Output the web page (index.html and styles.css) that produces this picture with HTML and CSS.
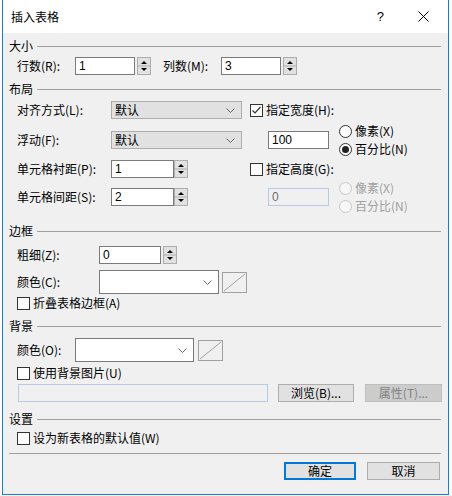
FILE: index.html
```html
<!DOCTYPE html>
<html lang="zh-CN">
<head>
<meta charset="utf-8">
<title>插入表格</title>
<link rel="stylesheet" href="styles.css">
</head>
<body>
<div class="page">
  <div class="dialog">
    <div class="titlebar">
      <span class="title">插入表格</span>
      <span class="help">?</span>
      <svg class="close" width="11" height="11" viewBox="0 0 11 11"><path d="M0.5 0.5L10.5 10.5M10.5 0.5L0.5 10.5" stroke="#000" stroke-width="1"/></svg>
    </div>
    <div class="content">
      <div class="grp g1">大小</div>
      <div class="row r-size">
        <span class="lbl w58">行数(R):</span>
        <div class="tb w60">1</div>
        <svg class="spin" width="14" height="18" viewBox="0 0 14 18"><rect x="0.5" y="0.5" width="13" height="17" fill="#e1e1e1" stroke="#adadad"/><line x1="1" y1="9" x2="13" y2="9" stroke="#adadad"/><path d="M4 7h6L7 4z" fill="#000"/><path d="M4 11h6l-3 3z" fill="#000"/></svg>
        <span class="lbl w58 ml12">列数(M):</span>
        <div class="tb w60">3</div>
        <svg class="spin" width="14" height="18" viewBox="0 0 14 18"><rect x="0.5" y="0.5" width="13" height="17" fill="#e1e1e1" stroke="#adadad"/><line x1="1" y1="9" x2="13" y2="9" stroke="#adadad"/><path d="M4 7h6L7 4z" fill="#000"/><path d="M4 11h6l-3 3z" fill="#000"/></svg>
      </div>

      <div class="grp g2">布局</div>
      <div class="row r-l1">
        <span class="lbl w94">对齐方式(L):</span>
        <div class="left-ctrl"><div class="sel w131"><span>默认</span><svg width="9" height="5" viewBox="0 0 9 5"><path d="M0.5 0.5L4.5 4.5L8.5 0.5" fill="none" stroke="#666"/></svg></div></div>
        <span class="cb checked"><svg width="13" height="13" viewBox="0 0 13 13"><rect x="0.5" y="0.5" width="12" height="12" fill="#fff" stroke="#333"/><path d="M2.5 6.5L5 9L10.5 3" fill="none" stroke="#333" stroke-width="1.2"/></svg>指定宽度(H):</span>
      </div>
      <div class="row r-l2">
        <span class="lbl w94">浮动(F):</span>
        <div class="left-ctrl"><div class="sel w131"><span>默认</span><svg width="9" height="5" viewBox="0 0 9 5"><path d="M0.5 0.5L4.5 4.5L8.5 0.5" fill="none" stroke="#666"/></svg></div></div>
        <div class="tb w61 ml18">100</div>
        <div class="radios">
          <span class="rb"><svg width="13" height="13" viewBox="0 0 13 13"><circle cx="6.5" cy="6.5" r="6" fill="#fff" stroke="#333"/></svg>像素(X)</span>
          <span class="rb"><svg width="13" height="13" viewBox="0 0 13 13"><circle cx="6.5" cy="6.5" r="6" fill="#fff" stroke="#333"/><circle cx="6.5" cy="6.5" r="3.5" fill="#222"/></svg>百分比(N)</span>
        </div>
      </div>
      <div class="row r-l3">
        <span class="lbl w94">单元格衬距(P):</span>
        <div class="left-ctrl">
          <div class="tb w63">1</div>
          <svg class="spin tight" width="14" height="18" viewBox="0 0 14 18"><rect x="0.5" y="0.5" width="13" height="17" fill="#e1e1e1" stroke="#adadad"/><line x1="1" y1="9" x2="13" y2="9" stroke="#adadad"/><path d="M4 7h6L7 4z" fill="#000"/><path d="M4 11h6l-3 3z" fill="#000"/></svg>
        </div>
        <span class="cb"><svg width="13" height="13" viewBox="0 0 13 13"><rect x="0.5" y="0.5" width="12" height="12" fill="#fff" stroke="#333"/></svg>指定高度(G):</span>
      </div>
      <div class="row r-l4">
        <span class="lbl w94">单元格间距(S):</span>
        <div class="left-ctrl">
          <div class="tb w63">2</div>
          <svg class="spin tight" width="14" height="18" viewBox="0 0 14 18"><rect x="0.5" y="0.5" width="13" height="17" fill="#e1e1e1" stroke="#adadad"/><line x1="1" y1="9" x2="13" y2="9" stroke="#adadad"/><path d="M4 7h6L7 4z" fill="#000"/><path d="M4 11h6l-3 3z" fill="#000"/></svg>
        </div>
        <div class="tb w61 ml18 disabled">0</div>
        <div class="radios dis">
          <span class="rb"><svg width="13" height="13" viewBox="0 0 13 13"><circle cx="6.5" cy="6.5" r="6" fill="#f7f7f7" stroke="#c6c6c6"/></svg>像素(X)</span>
          <span class="rb"><svg width="13" height="13" viewBox="0 0 13 13"><circle cx="6.5" cy="6.5" r="6" fill="#f7f7f7" stroke="#c6c6c6"/></svg>百分比(N)</span>
        </div>
      </div>

      <div class="grp g3">边框</div>
      <div class="row r-b1">
        <span class="lbl w82">粗细(Z):</span>
        <div class="tb w62">0</div>
        <svg class="spin" width="14" height="18" viewBox="0 0 14 18"><rect x="0.5" y="0.5" width="13" height="17" fill="#e1e1e1" stroke="#adadad"/><line x1="1" y1="9" x2="13" y2="9" stroke="#adadad"/><path d="M4 7h6L7 4z" fill="#000"/><path d="M4 11h6l-3 3z" fill="#000"/></svg>
      </div>
      <div class="row tall r-b2">
        <span class="lbl w82">颜色(C):</span>
        <div class="csel w120"><svg width="9" height="5" viewBox="0 0 9 5"><path d="M0.5 0.5L4.5 4.5L8.5 0.5" fill="none" stroke="#666"/></svg></div>
        <svg class="swatch" width="25" height="21" viewBox="0 0 25 21"><rect x="0.5" y="0.5" width="24" height="20" fill="#f0f0f0" stroke="#a0a0a0"/><path d="M2 19L23 2" stroke="#a0a0a0"/></svg>
      </div>
      <div class="row cbrow r-b3">
        <span class="cb"><svg width="13" height="13" viewBox="0 0 13 13"><rect x="0.5" y="0.5" width="12" height="12" fill="#fff" stroke="#333"/></svg>折叠表格边框(A)</span>
      </div>

      <div class="grp g4">背景</div>
      <div class="row tall r-k1">
        <span class="lbl w58">颜色(O):</span>
        <div class="csel w119"><svg width="9" height="5" viewBox="0 0 9 5"><path d="M0.5 0.5L4.5 4.5L8.5 0.5" fill="none" stroke="#666"/></svg></div>
        <svg class="swatch sw2" width="25" height="21" viewBox="0 0 25 21"><rect x="0.5" y="0.5" width="24" height="20" fill="#f0f0f0" stroke="#a0a0a0"/><path d="M2 19L23 2" stroke="#a0a0a0"/></svg>
      </div>
      <div class="row cbrow r-k2">
        <span class="cb"><svg width="13" height="13" viewBox="0 0 13 13"><rect x="0.5" y="0.5" width="12" height="12" fill="#fff" stroke="#333"/></svg>使用背景图片(U)</span>
      </div>
      <div class="row r-k3">
        <div class="tb path disabled"></div>
        <button class="btn browse">浏览(B)...</button>
        <button class="btn props" disabled>属性(T)...</button>
      </div>

      <div class="grp g5">设置</div>
      <div class="row cbrow r-s1">
        <span class="cb"><svg width="13" height="13" viewBox="0 0 13 13"><rect x="0.5" y="0.5" width="12" height="12" fill="#fff" stroke="#333"/></svg>设为新表格的默认值(W)</span>
      </div>
      <div class="sep"></div>
      <div class="footer">
        <button class="btn ok">确定</button>
        <button class="btn cancel">取消</button>
      </div>
    </div>
  </div>
</div>
</body>
</html>
```

FILE: styles.css
```css
html, body {
  margin: 0;
  background: #ffffff;
}
body {
  font-family: "Noto Sans CJK SC", "Noto Sans", sans-serif;
  font-size: 12px;
  color: #000;
  line-height: 14px;
}
.page {
  padding-left: 2px;
}
.dialog {
  width: 445px;
  height: 494px;
  border: 1px solid #1a7fd4;
  border-top: none;
  background: #f0f0f0;
}
.titlebar {
  height: 33px;
  background: #fff;
  display: flex;
  align-items: center;
  padding-left: 8px;
  box-sizing: border-box;
}
.title {
  font-size: 12px;
}
.help {
  margin-left: auto;
  font-family: "Liberation Sans", sans-serif;
  font-size: 13px;
  margin-right: 34px;
}
.close {
  margin-right: 19px;
}
.content {
  padding: 0 7px 0 6px;
}
.grp {
  display: flex;
  align-items: center;
  height: 14px;
}
.grp::after {
  content: "";
  flex: 1;
  height: 1px;
  background: #a0a0a0;
  margin-left: 4px;
}
.g1 { margin-top: 6px; }
.g2 { margin-top: 7px; }
.g3 { margin-top: 18px; }
.g4 { margin-top: 9px; }
.g5 { margin-top: 10px; }

.row {
  display: flex;
  align-items: center;
  height: 18px;
  padding-left: 8px;
}
.row.tall { height: 24px; }
.row.cbrow { height: 14px; }
.r-size { margin-top: 4px; }
.r-l1 { margin-top: 5px; }
.r-l2 { margin-top: 12px; }
.r-l3 { margin-top: 11px; }
.r-l4 { margin-top: 10px; }
.r-b1 { margin-top: 8px; }
.r-b2 { margin-top: 6px; }
.r-b3 { margin-top: 2px; }
.r-k1 { margin-top: 5px; }
.r-k2 { margin-top: 4px; }
.r-k3 { margin-top: 4px; padding-left: 9px; }
.r-s1 { margin-top: 5px; }

.lbl { flex: none; white-space: nowrap; }
.w58 { width: 58px; }
.w82 { width: 82px; }
.w94 { width: 94px; }
.ml12 { margin-left: 12px; }
.ml18 { margin-left: 18px; }

.tb {
  box-sizing: border-box;
  height: 18px;
  border: 1px solid #7a7a7a;
  background: #fff;
  padding-left: 3px;
  line-height: 16px;
  font-family: "Liberation Sans", "Noto Sans CJK SC", sans-serif;
  font-size: 12px;
  flex: none;
}
.tb.disabled {
  border-color: #b6cbe3;
  background: #f0f0f0;
  color: #6d6d6d;
}
.w60 { width: 60px; }
.w61 { width: 61px; }
.w62 { width: 62px; }
.w63 { width: 63px; }
.spin { flex: none; margin-left: 2px; display: block; }
.spin.tight { margin-left: 0; }

.left-ctrl {
  width: 139px;
  flex: none;
  display: flex;
  align-items: center;
}
.sel {
  box-sizing: border-box;
  height: 18px;
  border: 1px solid #adadad;
  background: #e1e1e1;
  display: flex;
  align-items: center;
  justify-content: space-between;
  padding: 0 6px 0 3px;
}
.w131 { width: 131px; }
.csel {
  box-sizing: border-box;
  height: 24px;
  border: 1px solid #7a7a7a;
  background: #fff;
  display: flex;
  align-items: center;
  justify-content: flex-end;
  padding-right: 6px;
  flex: none;
}
.w120 { width: 120px; }
.w119 { width: 119px; }
.swatch { flex: none; margin-left: 3px; display: block; }
.swatch.sw2 { margin-left: 4px; }

.cb, .rb {
  display: flex;
  align-items: center;
  white-space: nowrap;
}
.cb svg, .rb svg {
  flex: none;
  margin-right: 3px;
}
.radios {
  display: flex;
  flex-direction: column;
  margin-left: 10px;
}
.radios .rb { height: 18px; }
.radios.dis { color: #a0a0a0; }

.path {
  width: 250px;
}
.btn {
  box-sizing: border-box;
  height: 18px;
  border: 1px solid #adadad;
  background: #e1e1e1;
  font-family: "Noto Sans CJK SC", sans-serif;
  font-size: 12px;
  line-height: 14px;
  color: #000;
  padding: 0;
  flex: none;
}
.browse { width: 76px; margin-left: 10px; }
.props {
  width: 77px;
  margin-left: 11px;
  background: #cccccc;
  border-color: #bfbfbf;
  color: #838383;
}
.sep {
  height: 1px;
  background: #a0a0a0;
  margin-top: 8px;
}
.footer {
  display: flex;
  justify-content: flex-end;
  margin-top: 8px;
  padding-right: 1px;
}
.ok {
  width: 72px;
  border: 2px solid #0078d7;
}
.cancel {
  width: 73px;
  margin-left: 11px;
}
```
